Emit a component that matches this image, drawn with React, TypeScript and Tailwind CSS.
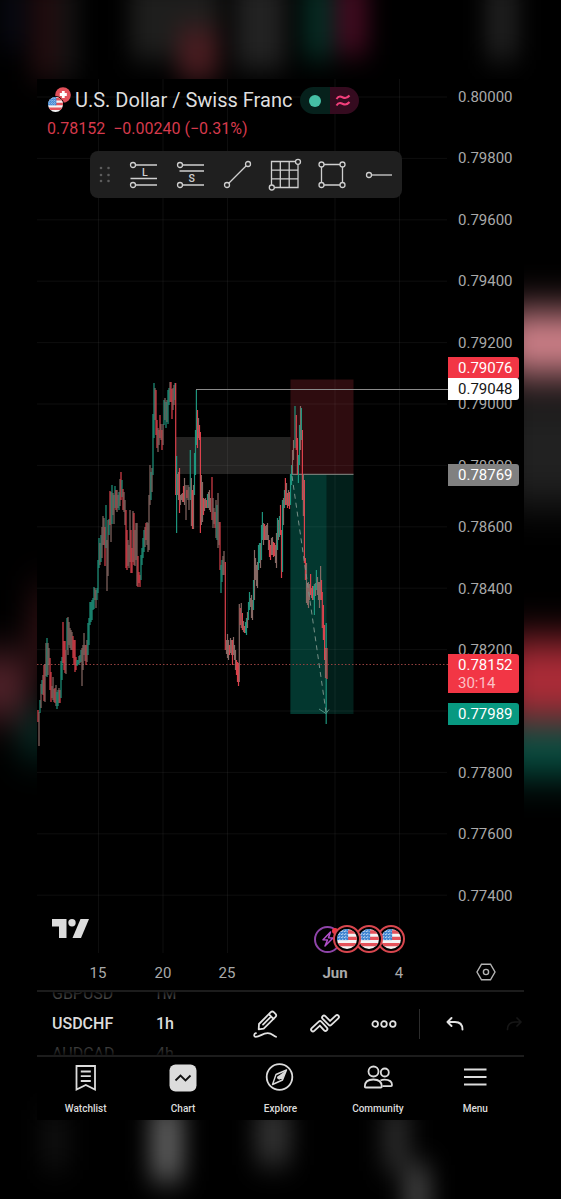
import React from "react";

type Tone = "g" | "r" | "m";

const TONES: Record<Tone, string> = { g: "#1f9c84", r: "#e8434f", m: "#8d6e68" };

/* Each bar: x, high, low, tone. */
const BARS = `
38 710 722 r;39 712 746 m;40 700 713 g;41 684 708 m;42 680 694 g;43 675 695 m;44 665 701 r;45 664 702 m;46 643 676 m;47 638 677 g;48 643 675 m;49 648 665 m;
50 658 690 r;51 672 702 r;52 686 698 m;53 677 700 m;54 689 702 m;55 688 703 r;56 685 706 m;57 692 709 g;58 690 706 g;59 688 703 m;60 690 703 r;61 661 698 g;
62 657 680 g;63 622 663 r;64 641 670 r;65 641 673 r;66 650 674 m;67 618 650 g;68 617 655 m;69 622 645 m;70 628 648 m;71 630 650 m;72 632 650 m;73 636 658 r;
74 640 665 r;75 640 672 r;76 657 670 r;77 660 666 g;78 660 665 g;79 656 664 g;80 655 663 m;81 650 662 g;82 648 686 m;83 645 670 m;84 633 655 m;85 645 661 m;86 645 665 r;
87 640 662 m;88 623 655 g;89 618 645 g;90 602 625 g;91 602 622 g;92 600 620 g;93 598 610 g;94 587 609 g;95 588 600 m;96 590 608 m;97 588 600 g;98 560 593 g;
99 538 568 g;100 543 565 m;101 535 562 g;102 527 558 m;103 516 545 m;104 518 545 m;105 527 566 r;106 505 548 g;107 540 591 m;108 520 576 m;109 519 535 g;110 491 525 r;
111 492 542 m;112 485 524 g;113 493 515 m;114 495 524 m;115 486 508 g;116 490 510 r;117 490 512 m;118 495 508 m;119 492 510 g;120 479 506 m;121 472 500 r;122 480 497 g;
123 489 510 r;124 492 512 m;125 500 525 m;126 510 568 r;127 530 570 r;128 540 566 m;129 545 568 m;130 510 562 m;131 530 573 r;132 548 573 r;133 511 562 m;134 513 565 r;
135 530 566 m;136 523 560 m;137 523 586 m;138 556 587 r;139 572 583 r;140 575 587 r;141 555 580 g;142 548 565 g;143 538 558 g;144 530 552 g;145 527 547 m;146 523 540 r;
147 522 545 m;148 523 552 m;149 495 550 m;150 465 505 m;151 472 500 g;152 468 492 m;153 414 475 g;154 383 438 g;155 388 420 m;156 390 435 r;157 420 448 r;158 428 452 m;
159 430 445 m;160 415 438 r;161 424 440 m;162 430 450 r;163 424 445 m;164 400 425 g;165 398 420 m;166 402 428 g;167 400 422 m;168 390 424 g;169 388 405 g;170 382 402 m;
171 382 402 r;172 389 419 r;173 388 410 m;174 385 405 m;175 383 400 g;175.7 383 495 r;176.6 456 533 g;177.5 474 495 m;178.5 472 500 m;179.5 468 513 r;180.5 495 505 m;181.5 494 500 m;
182.5 493 502 m;183.5 486 502 r;184.5 478 505 m;186 485 520 m;187 490 498 r;188 485 500 m;189 487 510 m;190.3 450 500 g;191.4 478 526 m;192.5 490 529 r;193.5 485 529 m;194.5 453 495 g;
195.5 430 475 g;196.4 390 445 g;197.5 410 448 r;198.5 418 438 m;199.5 425 440 r;200.4 432 533 r;201.4 475 525 m;202.5 482 522 m;203.5 498 515 r;204.5 499 511 m;205.5 498 508 m;206.5 500 508 r;
207.5 494 508 g;208.5 492 508 m;209.5 490 510 m;210.5 498 512 m;212 477 520 r;213 498 528 m;214 508 524 m;215 512 528 r;216 500 538 m;217 505 540 g;218 493 548 m;219 522 545 m;
220 522 570 r;221 565 593 g;222 560 582 g;223 556 575 m;224 551 575 m;225.3 562 650 r;226.5 640 654 m;227.5 634 658 m;228.5 640 660 m;229.5 645 655 r;230.5 638 653 m;231.5 640 655 m;
232.5 640 665 r;233.5 637 655 m;234.5 645 660 m;235.5 650 670 m;236.5 660 675 r;237.5 662 682 r;238.5 663 686 r;239.3 604 682 m;240.3 608 625 r;241.3 603 628 m;242.4 613 630 r;243.5 621 632 m;
244.5 626 633 r;245.5 622 633 g;246.5 618 635 g;247.5 612 628 m;248.5 602 620 g;249.5 592 610 g;250.5 598 607 m;251.5 595 618 m;252.5 600 620 m;253.5 580 610 g;254.5 550 600 m;255.5 558 580 m;
256.5 565 586 m;257.5 562 588 m;258.5 545 570 g;259.5 543 563 g;260.5 543 568 m;261.5 525 560 g;262.4 512 540 g;263.5 523 545 m;264.5 524 540 r;265.5 526 540 m;266.5 525 540 m;267.5 523 540 m;
268.5 535 550 m;269.5 540 557 r;270.5 545 560 r;271.5 538 555 m;272.5 537 555 m;273.5 542 557 r;274.5 543 556 r;275.5 545 563 m;276.5 533 568 m;277.5 518 550 g;278.5 520 540 m;279.5 516 537 g;
280.5 505 535 r;281.5 530 578 r;282.5 500 572 g;283.5 498 525 m;284.5 490 508 g;285.4 478 505 r;286.5 483 505 m;287.5 493 508 r;288.5 490 506 m;289.5 492 509 r;290.5 474 505 g;291.5 465 485 g;
292.5 450 474 m;293.5 440 460 m;295 406 448 g;296.3 415 450 r;297.4 438 475 r;298.4 455 483 g;299.5 425 465 g;300.5 406 450 m;301.4 408 440 g;302.4 430 500 r;303.4 475 516 m;304.4 480 563 r;
305.4 558 580 r;306.5 563 603 m;307.5 583 605 m;308.5 582 608 m;309.5 584 600 m;310.6 574 595 r;311.6 588 598 m;312.6 586 600 r;313.6 586 600 g;314.4 584 615 g;315.5 583 596 m;316.4 570 590 g;
317.5 577 595 m;318.5 582 600 m;319.5 582 608 m;320.6 566 600 m;321.5 580 600 r;322.3 592 628 r;323.4 605 640 r;324.6 625 660 r;325.5 648 678 r;326.2 623 724 g;327 648 679 r
`
  .split(";")
  .map((row) => {
    const [x, high, low, tone] = row.trim().split(" ");
    return { x: Number(x), high: Number(high), low: Number(low), tone: tone as Tone };
  });

const GRID_Y = Array.from({ length: 14 }, (_, i) => 97 + i * 61.4);
const GRID_X = [98.5, 163, 227.5, 335, 399.5];

const PRICES = [
  "0.80000", "0.79800", "0.79600", "0.79400", "0.79200", "0.79000", "0.78800",
  "0.78600", "0.78400", "0.78200", "0.78000", "0.77800", "0.77600", "0.77400",
];

const TIMES = [
  { label: "15", x: 61, bold: false },
  { label: "20", x: 126, bold: false },
  { label: "25", x: 190, bold: false },
  { label: "Jun", x: 298, bold: true },
  { label: "4", x: 362, bold: false },
];

function Backdrop() {
  return (
    <svg className="absolute inset-0 h-full w-full" viewBox="0 0 561 1199" preserveAspectRatio="none" aria-hidden="true">
      <defs>
        <filter id="soft" x="-100%" y="-100%" width="300%" height="300%" colorInterpolationFilters="sRGB">
          <feGaussianBlur stdDeviation="11 14" />
        </filter>
        <filter id="wide" x="-100%" y="-100%" width="300%" height="300%" colorInterpolationFilters="sRGB">
          <feGaussianBlur stdDeviation="14 20" />
        </filter>
      </defs>
      <g filter="url(#soft)">
        <rect x="0" y="-20" width="25" height="70" fill="#080912" />
        <rect x="30" y="-20" width="30" height="100" fill="#200c0e" />
        <rect x="60" y="-20" width="18" height="100" fill="#141414" />
        <rect x="130" y="-20" width="90" height="80" fill="#1e1e1d" />
        <rect x="178" y="28" width="40" height="52" fill="#481c20" />
        <rect x="235" y="-20" width="50" height="90" fill="#222222" />
        <rect x="302" y="-20" width="32" height="80" fill="#062a22" />
        <rect x="336" y="-20" width="32" height="75" fill="#400a1f" />
        <rect x="485" y="-20" width="34" height="80" fill="#1e1e1e" />
        <rect x="150" y="1105" width="34" height="76" fill="#585858" />
        <rect x="255" y="1105" width="36" height="60" fill="#303030" />
        <rect x="382" y="1105" width="28" height="66" fill="#282828" />
        <rect x="403" y="1165" width="28" height="60" fill="#3d3d3d" />
        <rect x="40" y="1110" width="30" height="60" fill="#0e0e0e" />
      </g>
      <g filter="url(#wide)">
        <rect x="505" y="395" width="90" height="110" fill="#212121" />
        <rect x="505" y="312" width="90" height="62" fill="#d98790" />
        <rect x="505" y="640" width="90" height="80" fill="#ad2c38" />
        <rect x="500" y="727" width="90" height="46" fill="#07594a" />
        <rect x="-30" y="655" width="58" height="62" fill="#52222a" />
        <rect x="30" y="590" width="30" height="80" fill="#301013" />
        <rect x="18" y="715" width="40" height="38" fill="#06322a" />
      </g>
    </svg>
  );
}

function PriceChart() {
  return (
    <svg className="absolute inset-0 h-full w-full" viewBox="37 79 411 875" preserveAspectRatio="none" role="img" aria-label="USDCHF hourly price chart">
      <rect x="176" y="437" width="115" height="37" fill="#242322" />
      <rect x="290.5" y="379.5" width="63" height="94.5" fill="#2e0c0f" />
      <rect x="290.5" y="474" width="63" height="240" fill="#021f1a" />
      <rect x="290.5" y="474" width="36" height="240" fill="#03372f" />
      <g stroke="#ffffff" strokeOpacity="0.055" strokeWidth="1">
        {GRID_Y.map((y) => <line key={y} x1="37" x2="447" y1={y} y2={y} />)}
        {GRID_X.map((x) => <line key={x} x1={x} x2={x} y1="79" y2="953" />)}
      </g>
      <line x1="196" x2="448" y1="389.5" y2="389.5" stroke="#8a8a8a" />
      <line x1="290.5" x2="353.5" y1="474.3" y2="474.3" stroke="#8d8d88" />
      <line x1="37" x2="448" y1="664.5" y2="664.5" stroke="#93403f" strokeDasharray="1.5 2" />
      {BARS.map((b) => (
        <line key={b.x} x1={b.x} x2={b.x} y1={b.high} y2={b.low} stroke={TONES[b.tone]} strokeWidth="1.2" strokeOpacity="0.95" />
      ))}
      <path d="M292 476L326 712" stroke="#779087" strokeDasharray="5 4" fill="none" />
      <path d="M319 709l7 4.500 3-4" stroke="#4f9182" fill="none" />
    </svg>
  );
}

function UsFlag({ size, id }: { size: number; id: string }) {
  return (
    <svg width={size} height={size} viewBox="0 0 18 18" aria-hidden="true" className="block shrink-0">
      <clipPath id={id}><circle cx="9" cy="9" r="9" /></clipPath>
      <g clipPath={`url(#${id})`}>
        <rect width="18" height="18" fill="#f4f4f4" />
        <path d="M9 1.200h9v3H9zM9 7h9v3H9zM0 12.500h18V15.500H0z" fill="#e4525a" />
        <rect width="10" height="10" fill="#3b82d0" />
        <path d="M2.500 1v9M5.200 1v9M7.900 1v9M1 2.300h8.500M1 5h8.500M1 7.700h8.500" stroke="#c5dcf3" strokeWidth="0.8" strokeDasharray="1.300 1.300" />
      </g>
    </svg>
  );
}

const drawTools: { label: string; art: React.ReactNode }[] = [
  {
    label: "Long position",
    art: (
      <>
        <path d="M5 6h24M2.500 19.500H29M5 26h24" />
        <circle cx="5" cy="6" r="2.500" /><circle cx="5" cy="26" r="2.500" />
        <text x="14" y="17" fontSize="10.500" className="fill-[#cfcfcf] stroke-none font-medium">L</text>
      </>
    ),
  },
  {
    label: "Short position",
    art: (
      <>
        <path d="M5 6h24M4.500 12H29M5 26h24" />
        <circle cx="5" cy="6" r="2.500" /><circle cx="5" cy="26" r="2.500" />
        <text x="13.500" y="23" fontSize="10.500" className="fill-[#cfcfcf] stroke-none font-medium">S</text>
      </>
    ),
  },
  {
    label: "Trend line",
    art: (
      <>
        <path d="M5 26L26 5" />
        <circle cx="5" cy="26" r="2.500" /><circle cx="26" cy="5" r="2.500" />
      </>
    ),
  },
  {
    label: "Grid",
    art: (
      <>
        <path d="M2.500 2.500h26.500v26H2.500zM11.300 2.500v26M20.200 2.500v26M2.500 11.200H29M2.500 19.800H29" />
        <circle cx="29" cy="2.800" r="2.500" /><circle cx="2.800" cy="28.500" r="2.500" />
      </>
    ),
  },
  {
    label: "Rectangle",
    art: (
      <>
        <path d="M5.500 5.500h21v20.500h-21z" />
        <circle cx="5.500" cy="5.500" r="2.500" /><circle cx="26.500" cy="5.500" r="2.500" />
        <circle cx="5.500" cy="26" r="2.500" /><circle cx="26.500" cy="26" r="2.500" />
      </>
    ),
  },
  {
    label: "Horizontal ray",
    art: (
      <>
        <path d="M6 16h23" />
        <circle cx="6" cy="16" r="2.500" />
      </>
    ),
  },
];

function DrawingBar() {
  return (
    <div className="relative ml-[53px] mt-3 flex h-[47px] w-[312px] items-center rounded-lg bg-[#1f1f1f]" role="toolbar" aria-label="Drawing tools">
      <svg width="30" height="20" viewBox="0 0 30 20" className="shrink-0 fill-[#5c5c5c]" aria-hidden="true">
        {[3, 10, 16].map((y) => (
          <g key={y}><circle cx="11" cy={y} r="1.300" /><circle cx="18.500" cy={y} r="1.300" /></g>
        ))}
      </svg>
      {drawTools.map((t) => (
        <button key={t.label} type="button" aria-label={t.label} className="flex h-full flex-1 items-center justify-center">
          <svg width="32" height="32" viewBox="0 0 32 32" fill="#1f1f1f" stroke="#cfcfcf" strokeWidth="1.300" className="overflow-visible">
            {t.art}
          </svg>
        </button>
      ))}
    </div>
  );
}

function Header() {
  return (
    <header className="relative pl-[10px] pt-2">
      <div className="flex h-[27px] items-center">
        <span className="relative block size-6 shrink-0">
          <svg className="absolute -top-0.5 right-0" width="16" height="16" viewBox="0 0 16 16" aria-hidden="true">
            <circle cx="8" cy="8" r="7.800" fill="#e2505a" />
            <path d="M8.300 4v7M4.800 7.500h7" stroke="#fff" strokeWidth="2.800" />
          </svg>
          <span className="absolute bottom-0 left-0 rounded-full border border-black"><UsFlag size={15} id="pair" /></span>
        </span>
        <h1 className="ml-1 whitespace-nowrap pb-0.5 text-[20px] leading-6 text-[#dedede]">U.S. Dollar / Swiss Franc</h1>
        <span className="ml-2 flex h-[27px] w-[59px] shrink-0 overflow-hidden rounded-full">
          <span className="flex w-[30px] items-center justify-center bg-[#06211c]">
            <span className="size-3 rounded-full bg-[#45bfa5]" />
          </span>
          <span className="flex flex-1 items-center justify-center bg-[#350b1f] pr-1">
            <svg width="16" height="14" viewBox="0 0 16 14" fill="none" stroke="#f23f7b" strokeWidth="2" aria-hidden="true">
              <path d="M1.500 5C4 1 6 2.500 8 3.500S12 4.500 14.500 1.500M1.500 11.500C4 7.500 6 9 8 10s4 1 6.500-2" />
            </svg>
          </span>
        </span>
      </div>
      <p className="mt-[5px] flex h-5 items-center gap-2 whitespace-nowrap text-[16px] text-[#d63a4c]">
        <span>0.78152</span>
        <span>−0.00240 (−0.31%)</span>
      </p>
    </header>
  );
}

function Events() {
  return (
    <div className="relative mt-auto flex items-start pb-px pl-[14px]">
      <svg width="38" height="21" viewBox="0 0 38 21" fill="#dcdcdc" className="mt-[-7px] shrink-0" aria-label="TradingView" role="img">
        <path d="M1 1h14.500v19H8V8.500H1z" />
        <circle cx="21" cy="4.700" r="3.700" />
        <path d="M29.500 1H38l-8 19h-8.500z" />
      </svg>
      <div className="relative ml-auto mr-[43px] flex items-center">
        <span className="flex size-[27px] items-center justify-center rounded-full border-2 border-[#8e44a8]">
          <svg width="14" height="16" viewBox="0 0 14 16" fill="none" stroke="#b24fcb" strokeWidth="1.500" strokeLinejoin="round" aria-hidden="true">
            <path d="M9.500 1L2 8.800l4.500.2L4 15l8-8-4.500-.2z" />
          </svg>
        </span>
        <span className="absolute left-[18px] top-[3px] size-[6px] rounded-full bg-[#f23645]" />
        {[0, 1, 2].map((n) => (
          <span key={n} className={`relative flex size-[28px] items-center justify-center rounded-full border-2 border-[#d8464e] bg-black ${["z-30 -ml-2", "z-20 -ml-[6px]", "z-10 -ml-[6px]"][n]}`}>
            <UsFlag size={20} id={`event${n}`} />
          </span>
        ))}
      </div>
    </div>
  );
}

function PriceTag({ y, className, children }: { y: number; className: string; children: React.ReactNode }) {
  return (
    <div className={`absolute left-0 w-[71px] rounded-r-[3px] pl-[10px] text-[15px] leading-[22px] ${className}`} style={{ top: y }}>
      {children}
    </div>
  );
}

function PriceAxis() {
  return (
    <aside className="relative w-[76px] shrink-0" aria-label="Price scale">
      <ol className="flex h-[827px] flex-col justify-between pl-[10px] pt-2 text-[15px] leading-5 text-[#a9a9a9]">
        {PRICES.map((p) => <li key={p}>{p}</li>)}
      </ol>
      <PriceTag y={278} className="bg-[#f23645] text-white">0.79076</PriceTag>
      <PriceTag y={299} className="bg-white text-[#161616]">0.79048</PriceTag>
      <PriceTag y={385} className="bg-[#808080] text-white">0.78769</PriceTag>
      <PriceTag y={575} className="bg-[#f23645] text-white">
        <div className="leading-[22px]">0.78152</div>
        <div className="pb-0.5 leading-[15px] text-[#fbc0c5]">30:14</div>
      </PriceTag>
      <PriceTag y={624} className="bg-[#089981] text-white">0.77989</PriceTag>
    </aside>
  );
}

function Wheel({ items, className }: { items: [string, string, string]; className: string }) {
  return (
    <div className={`relative flex h-full flex-col justify-center overflow-hidden whitespace-nowrap text-[16px] leading-[30px] ${className}`}>
      <span className="shrink-0 text-[#555555]">{items[0]}</span>
      <span className="shrink-0 font-medium text-[#dcdcdc]">{items[1]}</span>
      <span className="shrink-0 text-[#555555]">{items[2]}</span>
      <span className="absolute inset-x-0 top-0 h-2 bg-linear-to-b from-black/70 to-transparent" />
      <span className="absolute inset-x-0 bottom-0 h-3 bg-linear-to-t from-black/80 to-transparent" />
    </div>
  );
}

function ChartToolbar() {
  const tool = "flex h-full w-[59px] items-center justify-center";
  return (
    <div className="flex h-[67px] items-center border-y-2 border-[#1c1c1c] pl-[15px]">
      <Wheel items={["GBPUSD", "USDCHF", "AUDCAD"]} className="w-[90px]" />
      <Wheel items={["1M", "1h", "4h"]} className="w-[46px] items-center" />
      <div className="ml-auto flex h-full items-center text-[#e2e2e2]">
        <button type="button" aria-label="Draw" className={tool}>
          <svg width="28" height="30" viewBox="0 0 28 30" fill="none" stroke="currentColor" strokeWidth="1.800" strokeLinejoin="round" strokeLinecap="round">
            <path d="M7 15L18.800 3.200a2.200 2.200 0 0 1 3 0l1.700 1.700a2.200 2.200 0 0 1 0 3L11.700 19.700l-5 .6zM16.800 5.200l4.800 4.800M11 15.600l7-7" />
            <path d="M4 24.200c-2.200.3-2.500 3.600-.3 3.600 4.500 0 6.500-3.600 12-3.600 4 0 5 2 8.300 3.600" />
          </svg>
        </button>
        <button type="button" aria-label="Indicators" className={tool}>
          <svg width="32" height="20" viewBox="0 0 32 20" fill="none" strokeLinecap="round" strokeLinejoin="round" className="overflow-visible">
            <path d="M4 15.500l7-6.500 5.500 6" stroke="#e2e2e2" strokeWidth="5.600" />
            <path d="M4 15.500l7-6.500 5.500 6" stroke="#000" strokeWidth="1.900" />
            <path d="M15 3.500l6 6 7-6.500" stroke="#000" strokeWidth="7" />
            <path d="M15 3.500l6 6 7-6.500" stroke="#e2e2e2" strokeWidth="5.600" />
            <path d="M15 3.500l6 6 7-6.500" stroke="#000" strokeWidth="1.900" />
          </svg>
        </button>
        <button type="button" aria-label="More" className={tool}>
          <svg width="26" height="10" viewBox="0 0 26 10" fill="none" stroke="currentColor" strokeWidth="1.800">
            <circle cx="4.200" cy="5" r="2.800" /><circle cx="13" cy="5" r="2.800" /><circle cx="21.800" cy="5" r="2.800" />
          </svg>
        </button>
        <span className="ml-[6px] h-[30px] w-px bg-[#2c2c2c]" />
        <button type="button" aria-label="Undo" className="flex h-full w-[69px] items-center justify-center">
          <svg width="18" height="14" viewBox="0 0 18 14" fill="none" stroke="currentColor" strokeWidth="1.900" strokeLinecap="round" strokeLinejoin="round">
            <path d="M5.500 1L1.500 5l4 4M2 5h7c5 0 7.500 3 7.500 7.500" />
          </svg>
        </button>
        <button type="button" aria-label="Redo" disabled className="flex h-full w-[35px] items-center justify-end pr-0.5 text-[#161616]">
          <svg width="16" height="14" viewBox="0 0 16 14" fill="none" stroke="currentColor" strokeWidth="1.700" strokeLinecap="round" strokeLinejoin="round">
            <path d="M11 1l4 4-4 4M14 5H9C4 5 1.500 8 1.500 12.500" />
          </svg>
        </button>
      </div>
    </div>
  );
}

const navItems: { label: string; art: React.ReactNode }[] = [
  {
    label: "Watchlist",
    art: <path d="M5.500 3h18.500v23.500L14.800 22l-9.300 4.500zM9.800 8.500h10M9.800 13.200h10M9.800 18h10" />,
  },
  {
    label: "Chart",
    art: (
      <>
        <rect x="1.500" y="1.500" width="27" height="27" rx="6" fill="#dcdcdc" stroke="none" />
        <path d="M7.500 17.500l5-5 5 5 5-5" stroke="#111" />
      </>
    ),
  },
  {
    label: "Explore",
    art: (
      <>
        <circle cx="14.500" cy="14" r="12.800" />
        <path d="M21.500 7L11 11.500 7.500 21.500 17.500 17z" strokeWidth="1.400" strokeLinejoin="round" />
        <path d="M21.500 7L13 13.200a1.800 1.800 0 0 0 2.500 2.800l2 .5z" fill="#dcdcdc" stroke="none" />
        <circle cx="14" cy="14.500" r="1.800" fill="#dcdcdc" stroke="none" />
      </>
    ),
  },
  {
    label: "Community",
    art: (
      <>
        <circle cx="10.500" cy="8.500" r="5" />
        <circle cx="21.800" cy="9.500" r="4" />
        <path d="M1.800 23.500c0-4.500 3-7 8.500-7s8.500 2.500 8.500 7c0 .6-.4 1-1 1h-15c-.6 0-1-.4-1-1z" />
        <path d="M17.500 17.500c1-.6 2.300-.9 4-.9 5 0 7.500 2 7.500 5.500 0 .6-.4 1-1 1h-8.500" />
      </>
    ),
  },
  { label: "Menu", art: <path d="M4 6.500h22.500M4 14h22.500M4 21.500h22.500" strokeWidth="2.200" /> },
];

function BottomNav() {
  return (
    <nav className="grid h-[63px] grid-cols-5">
      {navItems.map((n) => (
        <a key={n.label} href={`#${n.label.toLowerCase()}`} className="flex flex-col items-center pt-[6px] text-[10px] font-medium leading-3 text-[#dcdcdc]">
          <svg width="30" height="30" viewBox="0 0 30 30" fill="none" stroke="#dcdcdc" strokeWidth="1.800" aria-hidden="true">
            {n.art}
          </svg>
          <span className="mt-[10px]">{n.label}</span>
        </a>
      ))}
    </nav>
  );
}

export default function App() {
  return (
    <div className="relative flex min-h-screen flex-col overflow-hidden bg-black px-[37px] pb-[79px] pt-[79px] font-['Roboto',sans-serif]">
      <Backdrop />
      <main className="relative flex flex-col bg-black">
        <section className="flex h-[875px]">
          <div className="relative flex min-w-0 flex-1 flex-col">
            <PriceChart />
            <Header />
            <DrawingBar />
            <Events />
          </div>
          <PriceAxis />
        </section>
        <div className="flex h-9 items-center" aria-label="Time scale">
          <div className="relative h-full flex-1 text-[15px] leading-[38px] text-[#a9a9a9]">
            {TIMES.map((t) => (
              <span
                key={t.label}
                className={`absolute top-0 -translate-x-1/2 ${t.bold ? "font-bold" : ""}`}
                style={{ left: `${(t.x / 411) * 100}%` }}
              >
                {t.label}
              </span>
            ))}
          </div>
          <button type="button" aria-label="Scale settings" className="flex w-[76px] justify-center">
            <svg width="20" height="18" viewBox="0 0 20 18" fill="none" stroke="#b4b4b4" strokeWidth="1.400">
              <path d="M5.500 1.200h9L19 9l-4.500 7.800h-9L1 9z" />
              <circle cx="10" cy="9" r="2.600" />
            </svg>
          </button>
        </div>
        <ChartToolbar />
        <BottomNav />
      </main>
    </div>
  );
}
